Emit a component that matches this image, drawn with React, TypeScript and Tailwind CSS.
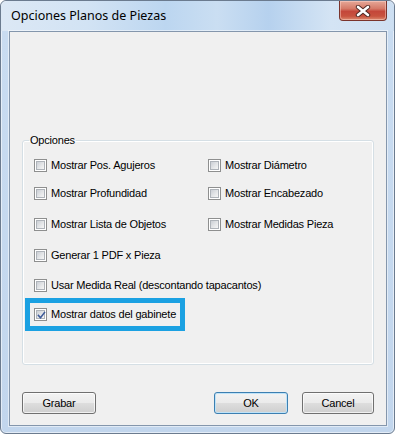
import React from 'react';

const Check = ({ checked = false }: { checked?: boolean }) => (
  <span className="flex-none w-[13px] h-[13px] border border-[#8e8f8f] bg-white p-[1px]">
    <span className="relative block w-full h-full border border-[#aeb3b9] bg-[linear-gradient(135deg,#cbcfd5_0%,#e4e6e8_55%,#f6f6f6_100%)]">
      {checked && (
        <svg className="absolute left-[-1px] top-[-1px]" width="11" height="11" viewBox="0 0 11 11">
          <path d="M2.5 5.5 L4.5 7.8 L8.5 2.5" fill="none" stroke="#3d5a98" strokeWidth="1.6" strokeLinecap="square" />
        </svg>
      )}
    </span>
  </span>
);

const Option = ({ label, checked = false, width }: { label: string; checked?: boolean; width?: string }) => (
  <div className={`flex items-center gap-[4px] h-[13px] ${width ?? ''}`}>
    <Check checked={checked} />
    <span className="whitespace-nowrap leading-[13px]">{label}</span>
  </div>
);

const Button = ({ label, isDefault = false, width = 'w-[74px]' }: { label: string; isDefault?: boolean; width?: string }) => (
  <div
    className={`${width} h-[22px] rounded-[3px] border flex items-center justify-center bg-[linear-gradient(180deg,#f3f3f3_0%,#ebebeb_48%,#dddddd_52%,#cfcfcf_100%)] ${
      isDefault ? 'border-[#3c7fb1] shadow-[inset_0_0_0_1px_#bfe3f8]' : 'border-[#707070] shadow-[inset_0_0_0_1px_rgba(255,255,255,0.7)]'
    }`}
  >
    {label}
  </div>
);

export default function App() {
  return (
    <div className="w-[395px] h-[435px] bg-white">
      <div className="w-[395px] h-[434px] flex flex-col rounded-[6px] border border-[#6b7b8f] bg-[linear-gradient(180deg,#dbe7f5_0px,#c9dcf1_30px,#c2d6ed_100%)] shadow-[inset_0_0_0_1px_rgba(255,255,255,0.55)]">
        {/* title bar */}
        <div className="h-[30px] flex-none flex justify-between rounded-t-[6px] bg-[linear-gradient(90deg,#dce8f5_0%,#d2e3f4_22%,#bcd6f0_42%,#cadef2_55%,#b6d1ee_68%,#d4e4f4_84%,#cddff2_100%)]">
          <span className="pl-[10px] pt-[6px] text-[12.5px] leading-[17px] text-black" style={{ fontFamily: '"Noto Sans", sans-serif' }}>
            Opciones Planos de Piezas
          </span>
          <div className="mr-[7px] w-[48px] h-[20px] flex items-center justify-center rounded-b-[4px] border border-t-0 border-[#7a342c] bg-[linear-gradient(180deg,#e6a898_0%,#d57a68_40%,#c4473a_55%,#c8533f_80%,#dc8a70_100%)] shadow-[inset_0_0_0_1px_rgba(255,220,210,0.45)]">
            <svg width="16" height="12" viewBox="0 0 16 12">
              <path d="M3 2 L13 10 M13 2 L3 10" stroke="#4a2622" strokeWidth="4.4" strokeLinecap="round" />
              <path d="M3 2 L13 10 M13 2 L3 10" stroke="#ffffff" strokeWidth="2.6" strokeLinecap="round" />
            </svg>
          </div>
        </div>

        {/* client area */}
        <div
          className="ml-[8px] mr-[7px] h-[395px] flex-none flex flex-col border border-[#8496ac] bg-[#f0f0f0] text-[11px] text-black tracking-[-0.2px] shadow-[0_0_0_1px_rgba(255,255,255,0.5)]"
          style={{ fontFamily: '"Liberation Sans", Arial, sans-serif' }}
        >
          <fieldset className="mx-[12px] mt-[102px] h-[231px] border border-[#d5dfe5] rounded-[3px] pl-[11px] pt-[12px] shadow-[inset_0_0_0_1px_#ffffff]">
            <legend className="-ml-[5px] px-[1px] leading-[13px]">Opciones</legend>
            <div className="flex">
              <Option label="Mostrar Pos. Agujeros" width="w-[174px]" />
              <Option label="Mostrar Diámetro" />
            </div>
            <div className="flex mt-[15px]">
              <Option label="Mostrar Profundidad" width="w-[174px]" />
              <Option label="Mostrar Encabezado" />
            </div>
            <div className="flex mt-[18px]">
              <Option label="Mostrar Lista de Objetos" width="w-[174px]" />
              <Option label="Mostrar Medidas Pieza" />
            </div>
            <div className="mt-[18px]">
              <Option label="Generar 1 PDF x Pieza" />
            </div>
            <div className="mt-[17px]">
              <Option label="Usar Medida Real (descontando tapacantos)" />
            </div>
            <div className="mt-[6px] -ml-[9px] w-[160px] h-[33px] border-[5px] border-[#1ba1e2] pl-[4px] flex items-center">
              <Option label="Mostrar datos del gabinete" checked />
            </div>
          </fieldset>

          <div className="mt-[27px] px-[12px] flex items-center">
            <Button label="Grabar" />
            <div className="flex-1" />
            <Button label="OK" isDefault />
            <div className="w-[14px]" />
            <Button label="Cancel" width="w-[72px]" />
          </div>
        </div>
      </div>
    </div>
  );
}
